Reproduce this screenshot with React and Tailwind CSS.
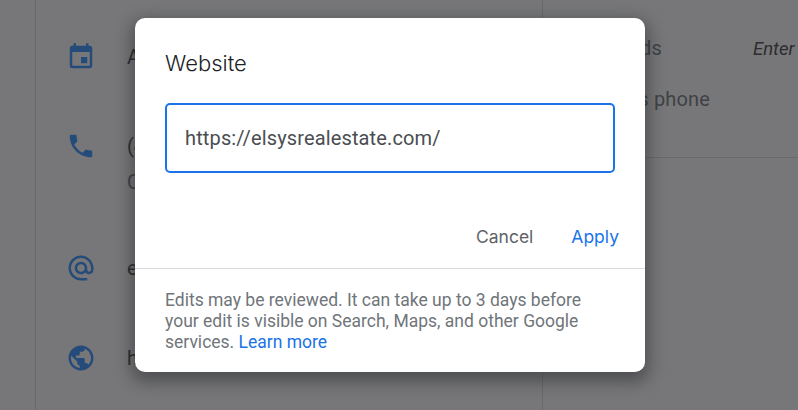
import { MdEvent, MdPhone, MdAlternateEmail, MdPublic } from 'react-icons/md';

function InfoRow({ icon: Icon, className, children }) {
  return (
    <div className={`flex gap-[31px] ${className}`}>
      <Icon className="w-[30px] h-[30px] text-[#2b8fff] shrink-0" />
      <div className="text-[20px] leading-[36px] text-[#3c4043] -mt-[3px]">{children}</div>
    </div>
  );
}

export default function App() {
  return (
    <div className="relative w-[798px] h-[410px] overflow-hidden bg-white font-['Roboto',sans-serif]">
      <div className="flex h-full">
        <div className="w-[36px] border-r border-[#dadce0] shrink-0" />
        <div className="w-[507px] shrink-0 border-r border-[#dadce0] pl-[30px] pt-[42px] flex flex-col">
          <InfoRow icon={MdEvent}>Add hours</InfoRow>
          <InfoRow icon={MdPhone} className="mt-[56px]">
            <div>(4</div>
            <div className="text-[#70757a]">Call</div>
          </InfoRow>
          <InfoRow icon={MdAlternateEmail} className="mt-[53px]">email</InfoRow>
          <InfoRow icon={MdPublic} className="mt-[57px]">https</InfoRow>
        </div>
        <div className="flex-1 min-w-0 overflow-hidden">
          <div className="h-[158px] border-b border-[#dadce0] pt-[30px] text-[20px] leading-[36px] text-[#70757a] tracking-[0.15px]">
            <div className="flex justify-end pr-[136px]">ds</div>
            <div className="flex justify-end pr-[88px] mt-[15px]">ns phone</div>
          </div>
        </div>
      </div>
      <div className="absolute left-[753px] top-[31px] text-[18.5px] leading-[36px] italic text-[#3c4043] whitespace-nowrap">Enter</div>

      <div className="absolute inset-0 bg-[rgba(32,33,36,0.61)]" />

      <div className="absolute left-[135px] top-[18px] w-[510px] h-[354px] bg-white rounded-[10px] shadow-[0_6px_16px_4px_rgba(32,33,36,0.45)]">
        <h2 className="pl-[30px] pt-[29px] text-[22px] leading-[32px] text-[#202124] font-['Inter',sans-serif] font-light">Website</h2>
        <div className="ml-[30px] mt-[24px] w-[450px] h-[70px] border-2 border-[#1a73e8] rounded-[5px] flex items-center pl-[18px] text-[20px] tracking-[0.14px] text-[#4a4d51]">
          https://elsysrealestate.com/
        </div>
        <div className="flex justify-end items-center h-[32px] mt-[48px] pr-[26px] gap-[38px] text-[17.5px] font-['Inter',sans-serif] font-normal">
          <span className="text-[#5f6368]">Cancel</span>
          <span className="text-[#1a73e8]">Apply</span>
        </div>
        <div className="mt-[15px] border-t border-[#dadce0] px-[30px] pt-[21px] text-[17.5px] leading-[21px] text-[#70757a]">
          Edits may be reviewed. It can take up to 3 days before your edit is visible on Search, Maps, and other Google services. <span className="text-[#1a73e8]">Learn more</span>
        </div>
      </div>
    </div>
  );
}
